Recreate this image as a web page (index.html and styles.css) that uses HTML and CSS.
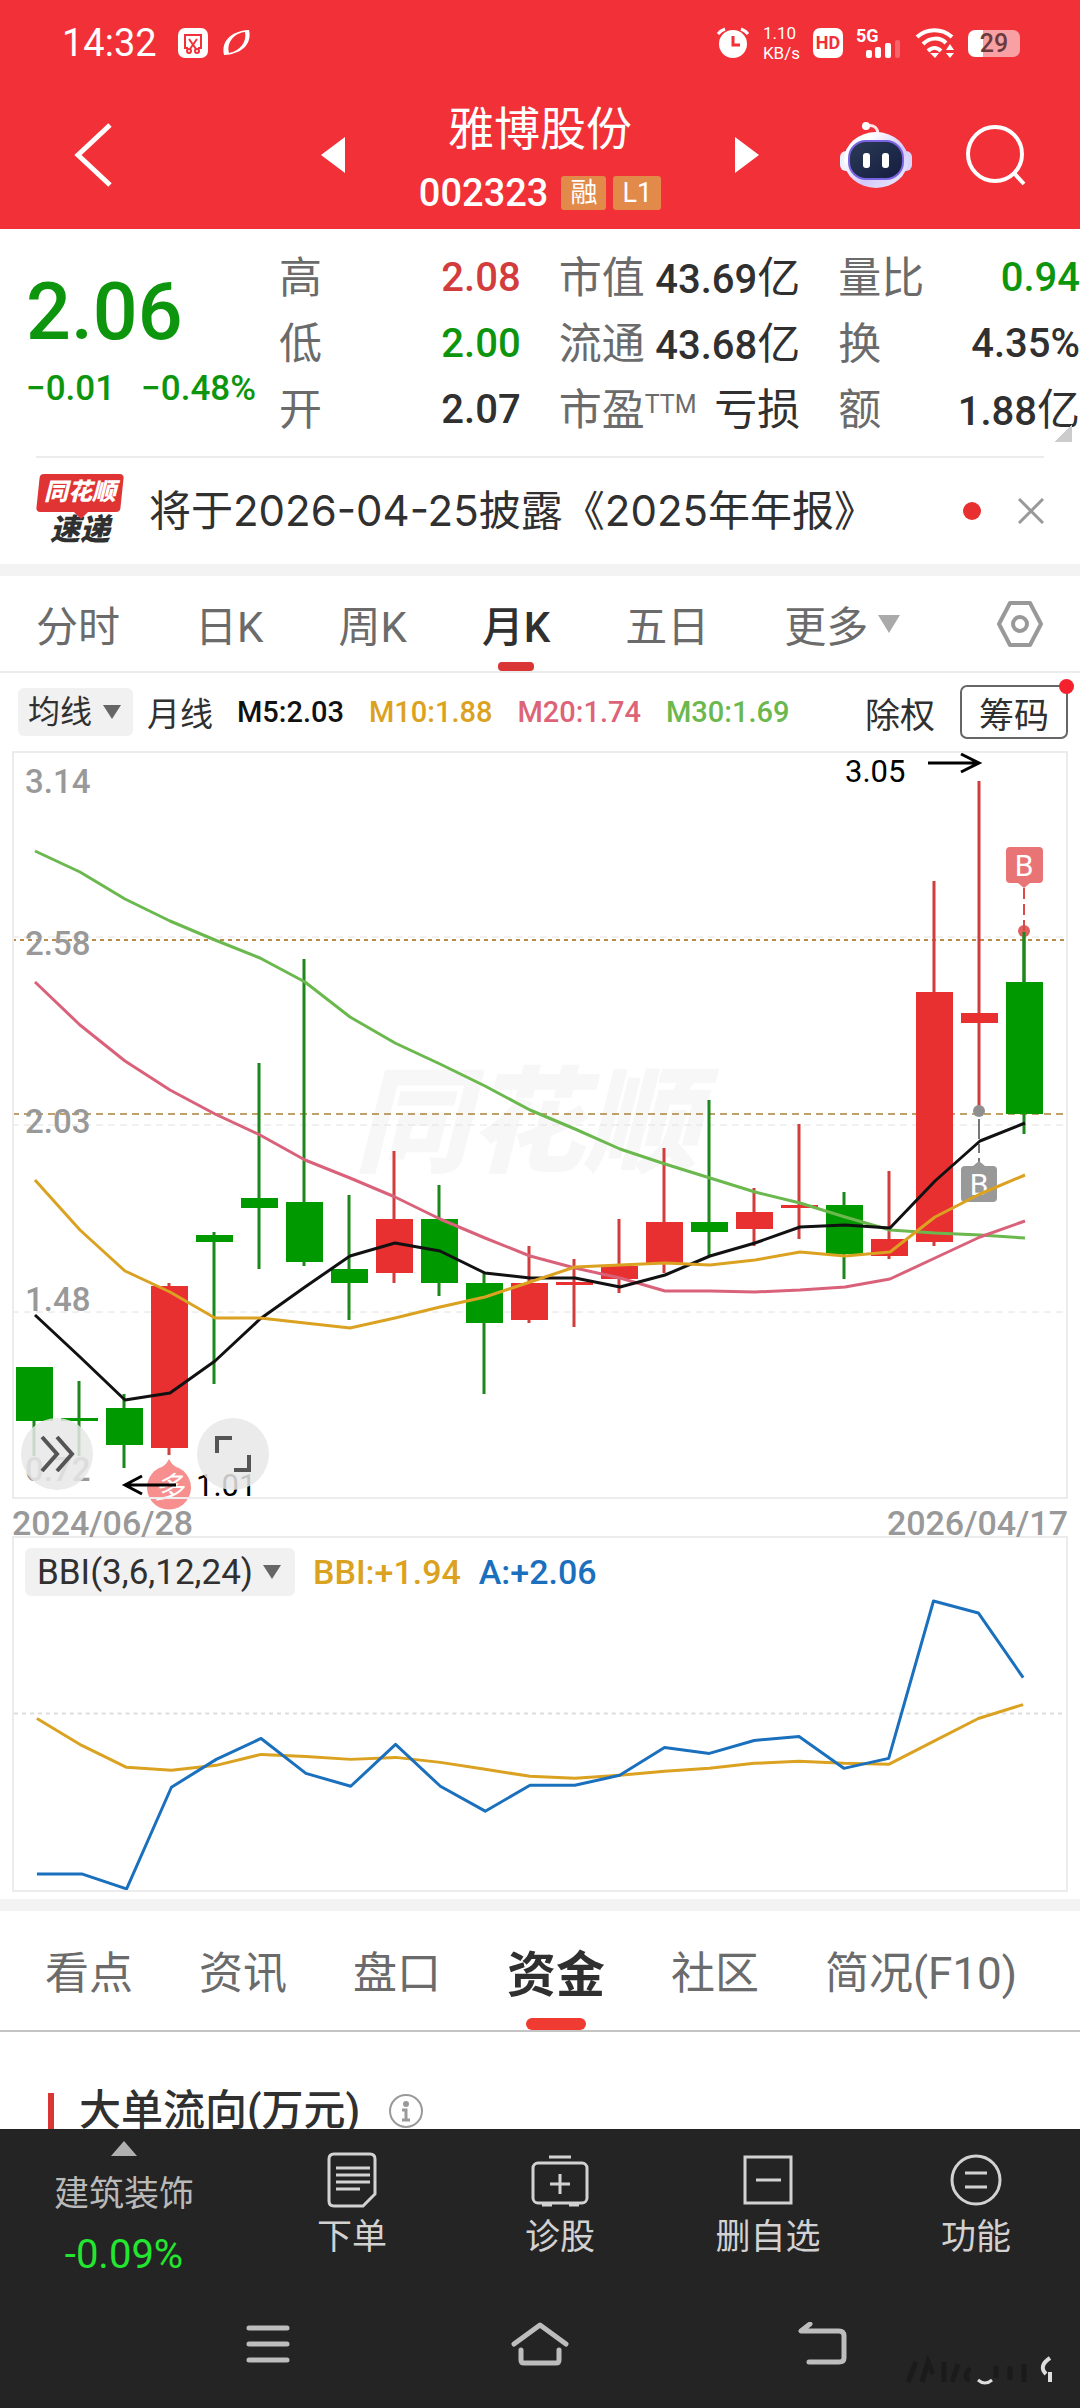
FILE: index.html
```html
<!DOCTYPE html>
<html lang="zh-CN">
<head>
  <meta charset="UTF-8" />
  <meta name="viewport" content="width=device-width, initial-scale=1.0"/>
  <title>雅博股份 002323</title>
  <link rel="stylesheet" href="styles.css">
</head>
<body>
<div class="app">
  <header class="top">
    <div class="status">
      <span class="clock">14:32</span>
      <svg width="30" height="30" viewBox="0 0 30 30"><rect width="30" height="30" rx="7" fill="#fff"/><path d="M10 20H7V7h16v13h-3" fill="none" stroke="#f13037" stroke-width="2"/><path d="M11 11l7 10M19 11l-7 10" stroke="#f13037" stroke-width="2"/><circle cx="11" cy="23" r="2" fill="none" stroke="#f13037" stroke-width="2"/><circle cx="19" cy="23" r="2" fill="none" stroke="#f13037" stroke-width="2"/></svg>
      <svg width="32" height="30" viewBox="0 0 32 30"><path d="M3 27C0 15 8 3 28 2c3 12-5 24-25 25z" fill="#fff"/><path d="M8 25C5 15 13 5 24 4c2 10-5 19-16 21z" fill="#f13037"/></svg>
      <span class="push"></span>
      <svg width="34" height="32" viewBox="0 0 34 32"><circle cx="17" cy="17" r="14" fill="#fff"/><path d="M2 7a16 16 0 0 1 7-5M32 7a16 16 0 0 0-7-5" fill="none" stroke="#fff" stroke-width="3"/><path d="M17 9v9h7" fill="none" stroke="#f13037" stroke-width="3"/></svg>
      <span class="speed"><span>1.10</span><span>KB/s</span></span>
      <span class="hd">HD</span>
      <svg class="signal" width="46" height="32" viewBox="0 0 46 32"><text x="0" y="15" class="net">5G</text><rect x="10" y="23" width="6" height="8" rx="2" fill="#fff"/><rect x="19" y="20" width="6" height="11" rx="2" fill="#fff"/><rect x="29" y="16" width="6" height="15" rx="2" fill="#fff"/><rect x="39" y="13" width="5" height="18" rx="2" fill="#fff" opacity=".25"/></svg>
      <svg width="40" height="32" viewBox="0 0 40 32"><g fill="none" stroke="#fff" stroke-width="4"><path d="M2 10c10-9 25-9 35 0"/><path d="M8 17c7-7 17-7 23-1"/><path d="M13 24c4-4 9-4 13 0"/></g><path d="M15 26h9l-4 5z" fill="#fff"/><path d="M31 23l4-6 4 6zM31 26h8l-4 5z" fill="#fff"/></svg>
      <span class="battery">29</span>
    </div>
    <div class="titlebar">
      <button class="back" aria-label="返回"><svg width="44" height="68" viewBox="0 0 44 68"><path d="M38 4L6 34l32 30" fill="none" stroke="#fff" stroke-width="5"/></svg></button>
      <div class="stock">
        <button aria-label="上一只"><svg width="24" height="36" viewBox="0 0 24 36"><path d="M24 0v36L0 18z" fill="#fff"/></svg></button>
        <div class="name">
          <h1>雅博股份</h1>
          <p><span>002323</span><i>融</i><i>L1</i></p>
        </div>
        <button aria-label="下一只"><svg width="24" height="36" viewBox="0 0 24 36"><path d="M0 0v36l24-18z" fill="#fff"/></svg></button>
      </div>
      <div class="tools">
        <button aria-label="智能助手"><svg width="72" height="68" viewBox="0 0 72 68">
          <defs>
            <linearGradient id="shell" x1="0" y1="0" x2="1" y2="1"><stop offset="0" stop-color="#e6f2fd"/><stop offset=".25" stop-color="#fff"/><stop offset=".6" stop-color="#d4c8fa"/><stop offset="1" stop-color="#eef2ff"/></linearGradient>
            <linearGradient id="face" x1="0" y1="0" x2="1" y2="1"><stop offset="0" stop-color="#2c3a57"/><stop offset="1" stop-color="#141d3f"/></linearGradient>
          </defs>
          <path d="M26 5c8-2 12 2 12 9" fill="none" stroke="#fde3e8" stroke-width="3"/><circle cx="26" cy="5" r="4" fill="#fff"/>
          <rect x="0" y="30" width="12" height="20" rx="6" fill="#eef0fd"/><rect x="60" y="30" width="12" height="20" rx="6" fill="#d9d3fa"/>
          <ellipse cx="36" cy="39" rx="32" ry="28" fill="url(#shell)"/>
          <rect x="9" y="20" width="54" height="38" rx="17" fill="url(#face)" stroke="#7a63e0" stroke-width="2"/>
          <rect x="23" y="32" width="7" height="15" rx="3" fill="#fff"/><rect x="42" y="32" width="7" height="15" rx="3" fill="#fff"/>
        </svg></button>
        <button aria-label="搜索"><svg width="60" height="62" viewBox="0 0 60 62"><circle cx="29" cy="30" r="27" fill="none" stroke="#fff" stroke-width="4"/><path d="M47 48l11 12" stroke="#fff" stroke-width="4"/></svg></button>
      </div>
    </div>
  </header>

  <main>
    <section class="quote">
      <div class="price">
        <strong>2.06</strong>
        <p><span>−0.01</span><span>−0.48%</span></p>
      </div>
      <dl class="stats">
        <div><dt>高</dt><dd class="red">2.08</dd></div>
        <div><dt>市值</dt><dd>43.69<span>亿</span></dd></div>
        <div><dt>量比</dt><dd class="green">0.94</dd></div>
        <div><dt>低</dt><dd class="green">2.00</dd></div>
        <div><dt>流通</dt><dd>43.68<span>亿</span></dd></div>
        <div><dt>换</dt><dd>4.35%</dd></div>
        <div><dt>开</dt><dd>2.07</dd></div>
        <div><dt>市盈<sup>TTM</sup></dt><dd><span>亏损</span></dd></div>
        <div><dt>额</dt><dd>1.88<span>亿</span></dd></div>
      </dl>
      <span class="corner"></span>
    </section>

    <section class="news">
      <div class="express"><b>同花顺</b><em>速递</em></div>
      <a href="#">将于2026-04-25披露《2025年年报》</a>
      <span class="dot"></span>
      <button aria-label="关闭"><svg width="26" height="26" viewBox="0 0 26 26"><path d="M1 1l24 24M25 1L1 25" stroke="#999" stroke-width="3"/></svg></button>
    </section>

    <nav class="periods">
      <button>分时</button>
      <button>日K</button>
      <button>周K</button>
      <button class="active">月K</button>
      <button>五日</button>
      <button class="more">更多</button>
      <button class="gear" aria-label="设置"><svg width="48" height="48" viewBox="0 0 48 48"><path d="M14 3h20l11 21-11 21H14L3 24z" fill="none" stroke="#999" stroke-width="4" stroke-linejoin="round"/><circle cx="24" cy="24" r="7" fill="none" stroke="#999" stroke-width="4"/></svg></button>
    </nav>

    <div class="averages">
      <label class="pick"><select aria-label="主图指标"><option>均线</option></select></label>
      <span class="cycle">月线</span>
      <span class="m5">M5:2.03</span>
      <span class="m10">M10:1.88</span>
      <span class="m20">M20:1.74</span>
      <span class="m30">M30:1.69</span>
      <button class="adjust">除权</button>
      <button class="chips">筹码</button>
    </div>

    <div class="chart">
      <svg class="kline" viewBox="12 752 1056 748">
        <text x="354" y="1164" class="mark">同花顺</text>
        <g fill="none" stroke="#e2e2e2" stroke-width="1" stroke-dasharray="7 5"><path d="M12 938H1068M12 1126H1068M12 1313H1068"/></g>
        <path d="M12 941H1068" stroke="#b98a4a" stroke-width="2" stroke-dasharray="4 4"/>
        <path d="M12 1115H1068" stroke="#bfa069" stroke-width="2" stroke-dasharray="7 5"/>
        <g class="scale">
          <text x="25" y="794">3.14</text><text x="25" y="956">2.58</text><text x="25" y="1134">2.03</text><text x="25" y="1312">1.48</text><text x="25" y="1482">0.72</text>
        </g>
        <!-- down months -->
        <path class="wick down" d="M34 1368V1457M79 1382V1457M124 1395V1469M214 1233V1385M259 1064V1270M304 960V1267M349 1196V1321M439 1186V1297M484 1274V1395M709 1101V1257M844 1193V1280M1024 933V1135"/>
        <g fill="#009900">
          <rect x="16" y="1368" width="37" height="54"/><rect x="61" y="1419" width="37" height="3"/><rect x="106" y="1409" width="37" height="37"/><rect x="196" y="1236" width="37" height="7"/><rect x="241" y="1199" width="37" height="10"/><rect x="286" y="1203" width="37" height="60"/><rect x="331" y="1270" width="37" height="14"/><rect x="421" y="1220" width="37" height="64"/><rect x="466" y="1284" width="37" height="40"/><rect x="691" y="1223" width="37" height="10"/><rect x="826" y="1206" width="37" height="49"/><rect x="1006" y="983" width="37" height="132"/>
        </g>
        <!-- up months -->
        <path class="wick up" d="M169 1284V1456M394 1152V1284M529 1247V1324M574 1260V1328M619 1220V1294M664 1149V1274M754 1189V1247M799 1125V1240M889 1172V1260M934 882V1247M979 782V1112"/>
        <g fill="#e93030">
          <rect x="151" y="1287" width="37" height="162"/><rect x="376" y="1220" width="37" height="54"/><rect x="511" y="1284" width="37" height="37"/><rect x="556" y="1283" width="37" height="3"/><rect x="601" y="1267" width="37" height="13"/><rect x="646" y="1223" width="37" height="41"/><rect x="736" y="1213" width="37" height="17"/><rect x="781" y="1206" width="37" height="3"/><rect x="871" y="1240" width="37" height="17"/><rect x="916" y="993" width="37" height="250"/><rect x="961" y="1014" width="37" height="10"/>
        </g>
        <!-- B markers -->
        <circle cx="1024" cy="932" r="6" fill="#e0605f"/><path d="M1024 889V932" stroke="#d9494a" stroke-width="2" stroke-dasharray="11 5"/><path d="M1024 933V983" class="wick down"/>
        <path d="M1010 848h29q4 0 4 4v28q0 4-4 4h-9l-6 5-6-5h-8q-4 0-4-4v-28q0-4 4-4z" fill="#e97475"/>
        <text x="1024" y="877" class="flag">B</text>
        <circle cx="979" cy="1112" r="6" fill="#8f8f8f"/><path d="M979 1120V1163" stroke="#777" stroke-width="2" stroke-dasharray="20 5 9 5"/>
        <path d="M965 1167h8l6-5 6 5h8q4 0 4 4v28q0 4-4 4h-28q-4 0-4-4v-28q0-4 4-4z" fill="#999"/>
        <text x="979" y="1196" class="flag">B</text>
        <!-- moving averages -->
        <g fill="none" stroke-width="3" stroke-linejoin="round">
          <polyline stroke="#6bb84e" points="35,852 80,873 125,900 170,922 215,941 260,959 305,983 350,1018 395,1044 440,1065 485,1087 530,1111 575,1130 620,1150 665,1165 710,1179 755,1193 800,1204 845,1218 890,1231 935,1234 980,1236 1025,1239"/>
          <polyline stroke="#d9627a" points="35,983 80,1026 125,1062 170,1091 215,1115 260,1136 305,1161 350,1179 395,1198 440,1220 485,1239 530,1257 575,1269 620,1279 665,1292 710,1292 755,1293 800,1291 845,1288 890,1280 935,1259 980,1238 1025,1222"/>
          <polyline stroke="#111" points="35,1316 80,1358 125,1401 170,1394 215,1362 260,1320 305,1288 350,1257 395,1244 440,1252 485,1274 530,1279 575,1279 620,1288 665,1276 710,1257 755,1244 800,1228 845,1226 890,1229 935,1182 980,1142 1025,1124"/>
          <polyline stroke="#dba221" points="35,1181 80,1231 125,1272 170,1293 215,1319 260,1319 305,1324 350,1329 395,1319 440,1308 485,1298 530,1283 575,1268 620,1266 665,1264 710,1266 755,1261 800,1253 845,1257 890,1253 935,1218 980,1195 1025,1176"/>
        </g>
        <text x="845" y="783" class="peak">3.05</text>
        <path d="M928 764H979M961 755l18 9-18 9" fill="none" stroke="#000" stroke-width="3"/>
        <path d="M169 1460q4 8 10 9a22 22 0 1 1-20 0q6-1 10-9z" fill="#f78f8f"/>
        <text x="169" y="1499" class="long">多</text>
        <path d="M176 1486H126M142 1477l-17 9 17 9" fill="none" stroke="#000" stroke-width="3"/>
        <text x="196" y="1497" class="peak">1.01</text>
      </svg>
      <button class="round next" aria-label="快进"><svg width="36" height="36" viewBox="0 0 36 36"><path d="M3 1l15 17L3 35M18 1l15 17-15 17" fill="none" stroke="#555" stroke-width="4"/></svg></button>
      <button class="round full" aria-label="全屏"><svg width="36" height="36" viewBox="0 0 36 36"><path d="M2 17V2h15M34 19v15H19" fill="none" stroke="#555" stroke-width="4"/></svg></button>
    </div>
    <div class="dates"><span>2024/06/28</span><span>2026/04/17</span></div>

    <div class="bbi">
      <div class="legend">
        <label class="pick"><select aria-label="副图指标"><option>BBI(3,6,12,24)</option></select></label>
        <span class="m10">BBI:+1.94</span>
        <span class="blue">A:+2.06</span>
      </div>
      <svg viewBox="12 1595 1056 295">
        <path d="M12 1713H1068" stroke="#ddd" stroke-width="2" stroke-dasharray="4 4"/>
        <g fill="none" stroke-width="3" stroke-linejoin="round">
          <polyline stroke="#dba221" points="35,1718 80,1745 125,1767 170,1770 215,1765 260,1754 305,1756 350,1759 395,1757 440,1762 485,1769 530,1776 575,1778 620,1775 665,1771 710,1768 755,1763 800,1761 845,1763 890,1764 935,1741 980,1718 1025,1704"/>
          <polyline stroke="#1b70bd" points="35,1874 80,1874 125,1889 170,1787 215,1759 260,1738 305,1773 350,1786 395,1744 440,1786 485,1811 530,1785 575,1785 620,1775 665,1747 710,1753 755,1740 800,1736 845,1768 890,1758 935,1600 980,1612 1025,1677"/>
        </g>
      </svg>
    </div>

    <nav class="sections">
      <button>看点</button>
      <button>资讯</button>
      <button>盘口</button>
      <button class="active">资金</button>
      <button>社区</button>
      <button>简况(F10)</button>
    </nav>

    <section class="flow">
      <h2>大单流向(万元)</h2>
      <button aria-label="说明"><svg width="36" height="36" viewBox="0 0 36 36"><circle cx="18" cy="18" r="16" fill="none" stroke="#999" stroke-width="2"/><circle cx="18" cy="11" r="3" fill="#999"/><path d="M14 17h4v10M14 27h8" fill="none" stroke="#999" stroke-width="3"/></svg></button>
    </section>
  </main>

  <footer class="bottom">
    <div class="actions">
      <a href="#" class="sector"><span class="up-mark"></span><span>建筑装饰</span><b>-0.09%</b></a>
      <a href="#"><svg width="58" height="56" viewBox="0 0 58 56"><path d="M11 2h36q5 0 5 5v35L40 54H11q-5 0-5-5V7q0-5 5-5z"/><path d="M13 16h34M13 23h34M13 30h34M13 37h24"/></svg><span>下单</span></a>
      <a href="#"><svg width="58" height="56" viewBox="0 0 58 56"><rect x="2" y="11" width="54" height="40" rx="5"/><path d="M18 5h22M11 53h10M38 53h10M29 22v20M19 32h20"/></svg><span>诊股</span></a>
      <a href="#"><svg width="58" height="56" viewBox="0 0 58 56"><rect x="6" y="5" width="46" height="46"/><path d="M17 28h25"/></svg><span>删自选</span></a>
      <a href="#"><svg width="58" height="56" viewBox="0 0 58 56"><circle cx="29" cy="28" r="24"/><path d="M18 21h22M18 35h22"/></svg><span>功能</span></a>
    </div>
    <div class="system">
      <button aria-label="最近任务"><svg width="58" height="46" viewBox="0 0 58 46"><path d="M16 6h38M16 22h38M16 38h38"/></svg></button>
      <button aria-label="主屏幕"><svg width="58" height="46" viewBox="0 0 58 46"><path d="M3 22L29 3l26 19M10 28v10q0 3 3 3h32q3 0 3-3V28"/></svg></button>
      <button aria-label="系统返回"><svg width="58" height="46" viewBox="0 0 58 46"><path d="M21 2L12 9h38q5 0 5 5v22q0 4-5 4H20"/></svg></button>
    </div>
    <svg class="stamp" width="150" height="32" viewBox="0 0 150 32"><g fill="none" stroke="#1b1b1b" stroke-width="5"><path d="M4 28L12 8M18 28l6-20 5 12M40 8v20M54 10l-6 18M66 14q-8 10 0 12M92 12v12M106 12v14M120 10v18"/></g><path d="M74 26q7 6 14 0" fill="none" stroke="#ddd" stroke-width="3"/><path d="M146 4q-12 8-4 16M146 18v10" fill="none" stroke="#ddd" stroke-width="4"/></svg>
  </footer>
</div>
</body>
</html>
```
FILE: styles.css
```css
:root {
  --red: #f13037;
  --up: #e93030;
  --down: #0d950d;
  --ink: #303030;
  --grey: #6b6b6b;
  --line: #ececec;
}
* { margin: 0; padding: 0; box-sizing: border-box; }
body { font-family: Roboto, "Noto Sans CJK SC", sans-serif; background: #fff; color: var(--ink); }
button, select { font: inherit; color: inherit; background: none; border: none; }
button svg { display: block; }
a { color: inherit; text-decoration: none; }
.app { display: flex; flex-direction: column; height: 100vh; }
main { flex: 1; min-height: 0; overflow: hidden; }
.red { color: #d23c3c; }
.green { color: var(--down); }
.blue { color: #1b70bd; }
.m5 { color: #111; }
.m10 { color: #dba221; }
.m20 { color: #dd6478; }
.m30 { color: #6bb84e; }

/* header */
.top { background: var(--red); color: #fff; height: 229px; }
.status { display: flex; align-items: center; height: 86px; padding: 0 60px 0 62px; gap: 13px; }
.clock { font-size: 38px; margin-right: 8px; }
.push { flex: 1; }
.speed { display: flex; flex-direction: column; font-size: 17px; line-height: 20px; }
.hd { background: #fff; color: var(--red); width: 30px; height: 30px; border-radius: 7px; font-size: 18px; font-weight: 700; line-height: 30px; text-align: center; }
.signal { overflow: visible; }
.net { font-size: 18px; font-weight: 700; fill: #fff; }
.battery { width: 52px; height: 27px; border-radius: 7px; background: linear-gradient(90deg, #fff 29%, #f8a0a4 29%); color: #6b3a3c; font-size: 25px; font-weight: 500; line-height: 27px; text-align: center; }
.titlebar { display: grid; grid-template-columns: 1fr 438px 1fr; align-items: center; height: 138px; }
.back { justify-self: start; padding: 0 72px; }
.stock { display: flex; justify-content: space-between; align-items: center; }
.name { padding-top: 10px; text-align: center; }
.name h1 { font-size: 46px; font-weight: 400; line-height: 66px; }
.name p { display: flex; align-items: center; gap: 7px; height: 62px; font-size: 38px; font-weight: 500; }
.name p span { margin-right: 6px; }
.name i { background: #e28a4a; border-radius: 3px; padding: 0 9px; font-size: 27px; font-weight: 400; font-style: normal; line-height: 34px; }
.tools { display: flex; justify-content: flex-end; align-items: center; gap: 54px; padding-right: 54px; }

/* quote */
.quote { position: relative; display: flex; height: 227px; padding: 16px 0 0 26px; }
.price { width: 253px; padding-top: 20px; color: var(--down); }
.price strong { display: block; font-size: 79px; font-weight: 500; line-height: 94px; }
.price p { display: flex; gap: 26px; font-size: 35px; font-weight: 500; line-height: 60px; white-space: nowrap; }
.stats { flex: 1; display: grid; grid-template-columns: repeat(3, 1fr); column-gap: 38px; grid-auto-rows: 66px; }
.stats div { display: flex; justify-content: space-between; line-height: 66px; white-space: nowrap; }
.stats dt { font-size: 43px; color: var(--grey); }
.stats sup { font-size: 25px; line-height: 1; vertical-align: 12px; }
.stats dd { font-size: 40px; font-weight: 500; }
.stats dd span { font-size: 43px; font-weight: 400; }
.corner { position: absolute; right: 8px; bottom: 14px; width: 18px; height: 18px; background: linear-gradient(135deg, transparent 50%, #ccc 50%); }

/* news strip */
.news { display: flex; align-items: center; height: 108px; margin: 0 36px; border-top: 2px solid var(--line); }
.express { display: flex; flex-direction: column; width: 88px; align-items: center; margin-right: 25px; }
.express b { position: relative; width: 84px; height: 38px; font-size: 24px; font-weight: 900; line-height: 36px; color: #fff; font-style: italic; text-align: center; z-index: 0; }
.express b::before { content: ""; position: absolute; inset: 0; z-index: -1; background: #df3334; border-radius: 4px; transform: skewX(-6deg); }
.express b::after { content: ""; position: absolute; left: 36px; top: 38px; border: 7px solid transparent; border-top-color: #df3334; border-bottom: 0; }
.express em { font-size: 30px; font-weight: 900; line-height: 36px; }
.news a { flex: 1; font-family: Inter, "Noto Sans CJK SC", sans-serif; font-size: 42px; line-height: 60px; white-space: nowrap; }
.dot { width: 18px; height: 18px; border-radius: 50%; background: var(--up); margin-right: 37px; }

/* period tabs */
.periods { display: flex; align-items: stretch; gap: 75px; height: 109px; padding: 0 36px; border-top: 12px solid #f3f3f3; border-bottom: 2px solid var(--line); font-size: 42px; color: var(--grey); white-space: nowrap; }
.periods .active, .sections .active { position: relative; color: var(--ink); font-weight: 500; }
.periods .active::after { content: ""; position: absolute; left: 50%; bottom: 0; width: 36px; height: 9px; margin-left: -18px; border-radius: 4px; background: #d93636; }
.more { display: flex; align-items: center; gap: 10px; }
.more::after, .pick::after { content: ""; border: 11px solid transparent; border-top: 18px solid #aaa; border-bottom: 0; }
.gear { margin-left: auto; }

/* indicator row */
.averages { display: flex; align-items: center; height: 78px; padding: 0 12px 0 18px; font-size: 29px; font-weight: 500; white-space: nowrap; }
.averages span { margin-right: 25px; }
.averages .cycle { margin: 0 24px 0 14px; font-size: 33px; font-weight: 400; }
.pick { display: flex; align-items: center; gap: 10px; height: 48px; padding: 0 12px 0 10px; border-radius: 6px; background: #f1f1f1; }
.pick select { appearance: none; font-size: 32px; font-weight: 400; }
.pick::after { border-width: 14px 9px 0; border-top-color: #666; }
.adjust { margin-left: auto; font-size: 35px; font-weight: 400; }
.chips { position: relative; margin-left: 25px; padding: 0 17px; height: 54px; border: 2px solid #666; border-radius: 7px; font-size: 35px; font-weight: 400; }
.chips::after { content: ""; position: absolute; right: -8px; top: -8px; width: 15px; height: 15px; border-radius: 50%; background: #f5222d; }

/* candle chart */
.chart { position: relative; margin: 0 12px; outline: 2px solid var(--line); outline-offset: -2px; }
.chart svg { display: block; }
.chart .kline { width: 100%; overflow: visible; }
.wick { fill: none; stroke-width: 3; }
.wick.down { stroke: #1d861d; }
.wick.up { stroke: #d13d3d; }
.mark { font-size: 115px; font-weight: 900; font-style: italic; fill: #f7f7f7; }
.scale { font-size: 33px; font-weight: 500; fill: #999; }
.peak { font-size: 31px; }
.flag { font-size: 30px; fill: #fff; text-anchor: middle; }
.long { font-size: 30px; font-style: italic; fill: #fff; text-anchor: middle; }
.round { position: absolute; bottom: 9px; display: grid; place-items: center; width: 72px; height: 72px; border-radius: 50%; background: rgba(232, 232, 232, .85); }
.next { left: 9px; }
.full { left: 185px; }
.dates { display: flex; justify-content: space-between; margin: 0 12px; height: 37px; font-size: 34px; font-weight: 500; line-height: 48px; color: #999; }

/* BBI chart */
.bbi { margin: 0 12px; border: 2px solid var(--line); }
.bbi svg { display: block; width: 100%; }
.legend { display: flex; align-items: center; gap: 18px; height: 58px; padding: 10px 11px 0; font-size: 34px; font-weight: 500; }
.legend .pick { padding: 0 14px 0 12px; }
.legend select { font-size: 35px; }

/* section tabs */
.sections { display: flex; gap: 66px; height: 133px; margin-top: 7px; padding: 0 45px; border-top: 12px solid #f3f3f3; border-bottom: 2px solid #c4c4c4; font-size: 44px; color: var(--grey); white-space: nowrap; }
.sections .active { font-size: 49px; font-weight: 700; }
.sections .active::after { content: ""; position: absolute; left: 50%; bottom: 0; width: 60px; height: 12px; margin-left: -30px; border-radius: 6px; background: #f03b32; }
.flow { display: flex; align-items: center; gap: 28px; padding: 61px 48px 0; }
.flow h2 { border-left: 6px solid #d93636; padding-left: 25px; font-size: 42px; font-weight: 500; line-height: 36px; }

/* bottom bars */
.bottom { position: relative; height: 279px; background: #242424; color: #d2d2d2; }
.actions { display: grid; grid-template-columns: 248px repeat(4, 1fr); height: 160px; }
.actions a { display: flex; flex-direction: column; align-items: center; padding-top: 23px; font-size: 35px; line-height: 60px; }
.actions svg, .system svg { fill: none; stroke: #d2d2d2; stroke-width: 3; }
.actions .sector { padding-top: 12px; color: #b9b9b9; }
.sector b { font-size: 40px; font-weight: 400; color: #22e62f; }
.up-mark { border: 13px solid transparent; border-top: 0; border-bottom: 15px solid #b0b0b0; margin-bottom: 9px; }
.system { display: flex; justify-content: center; gap: 220px; padding-top: 33px; }
.system svg { stroke: #bdbdbd; stroke-width: 5; stroke-linecap: round; stroke-linejoin: round; }
.stamp { position: absolute; right: 26px; bottom: 22px; }
```
